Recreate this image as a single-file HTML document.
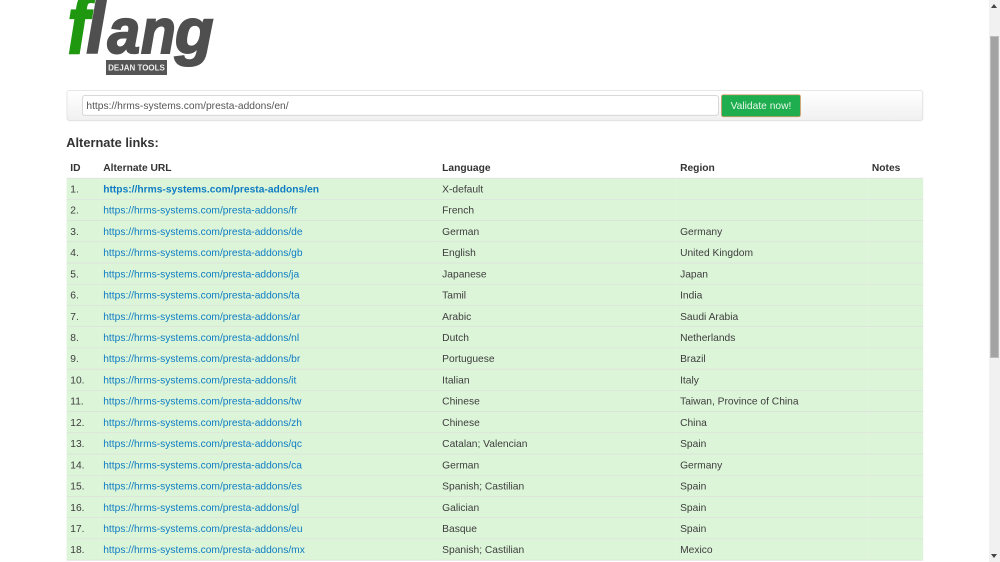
<!DOCTYPE html>
<html><head><meta charset="utf-8"><title>flang</title>
<style>
html,body{margin:0;padding:0;width:1000px;height:562px;overflow:hidden;background:#fff}
#s{position:absolute;left:0;top:0;width:1351px;height:768px;transform:scale(.73206,.7318);transform-origin:0 0;font-family:"Liberation Sans",Arial,sans-serif;font-size:14px;color:#333;overflow:hidden;filter:blur(.35px)}
#nav{position:absolute;left:91px;top:123px;width:1168px;height:40px;border:1px solid #ddd;border-radius:4px;background:linear-gradient(#fff,#f0f0f0);box-shadow:0 1px 1px rgba(0,0,0,.05)}
#inp{position:absolute;left:112px;top:130px;width:858px;height:26px;padding:0 5px;border:1px solid #ccc;border-radius:4px;background:#fff;line-height:26px;color:#555;font-size:14px}
#btn{position:absolute;left:985px;top:129px;width:107px;height:29px;border:1px solid #e79a6e;border-radius:3px;background:#1fae4f;color:#e6f7ea;text-align:center;line-height:29px;font-size:14px}
h3{position:absolute;left:90.5px;top:184px;margin:0;font-size:17.5px;line-height:22px;font-weight:bold;color:#333}
table{position:absolute;left:91px;top:214px;width:1170px;table-layout:fixed;border-collapse:separate;border-spacing:0}
th,td{padding:0 0 0 5px;height:28px;line-height:28px;text-align:left;white-space:nowrap;border-bottom:1px solid #ddd}
th{height:29px;line-height:29px;font-weight:bold;border-bottom:1px solid #ddd}
th span{position:relative;top:.6px}
tbody tr{background:#dcf5d8}
td{color:#3d3d3d}
a{color:#0e7cc4;text-decoration:none}
#sb{position:absolute;left:989px;top:0;width:11px;height:562px;background:#f1f1f1}
#th{position:absolute;left:1px;top:36px;width:7px;height:320px;background:#a3a3a3;border:1px solid #bdbdbd}
#up{position:absolute;left:2px;top:4px;width:0;height:0;border-left:3.5px solid transparent;border-right:3.5px solid transparent;border-bottom:4px solid #444}
#dn{position:absolute;left:2px;top:554px;width:0;height:0;border-left:3.5px solid transparent;border-right:3.5px solid transparent;border-top:4px solid #444}
#logo{position:absolute;left:60px;top:0;filter:blur(.3px)}
</style></head><body>
<svg id="logo" width="170" height="80" viewBox="60 0 170 80" font-family="'Liberation Sans',Arial,sans-serif" font-weight="bold" font-style="italic">
<text transform="translate(67.5 53) scale(1.1,1.35)" font-size="60" fill="#1f980f" stroke="#1f980f" stroke-width="1.6">f</text>
<text transform="translate(86 53) scale(1.2,1.35)" font-size="60" fill="#4f4f4f" stroke="#4f4f4f" stroke-width="1.2">l</text>
<text transform="translate(107.5 53) scale(.93,1)" font-size="63" fill="#4f4f4f" stroke="#4f4f4f" stroke-width="2">a</text>
<text transform="translate(141 53) scale(.9,1)" font-size="63" fill="#4f4f4f" stroke="#4f4f4f" stroke-width="2">n</text>
<text transform="translate(175 53)" font-size="63" fill="#4f4f4f" stroke="#4f4f4f" stroke-width="2">g</text>
<rect x="106" y="60" width="61" height="15" fill="#555"/>
<text x="136.5" y="70.5" text-anchor="middle" font-size="8" font-style="normal" fill="#eee">DEJAN TOOLS</text>
</svg>
<div id="s">
<div id="nav"></div>
<div id="inp">https://hrms-systems.com/presta-addons/en/</div>
<div id="btn">Validate now!</div>
<h3>Alternate links:</h3>
<table>
<colgroup><col style="width:45px"><col style="width:463px"><col style="width:325px"><col style="width:262px"><col></colgroup>
<thead><tr><th><span>ID</span></th><th><span>Alternate URL</span></th><th><span>Language</span></th><th><span>Region</span></th><th><span>Notes</span></th></tr></thead>
<tbody>
<tr><td>1.</td><td><a href="#"><b>https://hrms-systems.com/presta-addons/en</b></a></td><td>X-default</td><td></td><td></td></tr>
<tr><td>2.</td><td><a href="#">https://hrms-systems.com/presta-addons/fr</a></td><td>French</td><td></td><td></td></tr>
<tr><td>3.</td><td><a href="#">https://hrms-systems.com/presta-addons/de</a></td><td>German</td><td>Germany</td><td></td></tr>
<tr><td>4.</td><td><a href="#">https://hrms-systems.com/presta-addons/gb</a></td><td>English</td><td>United Kingdom</td><td></td></tr>
<tr><td>5.</td><td><a href="#">https://hrms-systems.com/presta-addons/ja</a></td><td>Japanese</td><td>Japan</td><td></td></tr>
<tr><td>6.</td><td><a href="#">https://hrms-systems.com/presta-addons/ta</a></td><td>Tamil</td><td>India</td><td></td></tr>
<tr><td>7.</td><td><a href="#">https://hrms-systems.com/presta-addons/ar</a></td><td>Arabic</td><td>Saudi Arabia</td><td></td></tr>
<tr><td>8.</td><td><a href="#">https://hrms-systems.com/presta-addons/nl</a></td><td>Dutch</td><td>Netherlands</td><td></td></tr>
<tr><td>9.</td><td><a href="#">https://hrms-systems.com/presta-addons/br</a></td><td>Portuguese</td><td>Brazil</td><td></td></tr>
<tr><td>10.</td><td><a href="#">https://hrms-systems.com/presta-addons/it</a></td><td>Italian</td><td>Italy</td><td></td></tr>
<tr><td>11.</td><td><a href="#">https://hrms-systems.com/presta-addons/tw</a></td><td>Chinese</td><td>Taiwan, Province of China</td><td></td></tr>
<tr><td>12.</td><td><a href="#">https://hrms-systems.com/presta-addons/zh</a></td><td>Chinese</td><td>China</td><td></td></tr>
<tr><td>13.</td><td><a href="#">https://hrms-systems.com/presta-addons/qc</a></td><td>Catalan; Valencian</td><td>Spain</td><td></td></tr>
<tr><td>14.</td><td><a href="#">https://hrms-systems.com/presta-addons/ca</a></td><td>German</td><td>Germany</td><td></td></tr>
<tr><td>15.</td><td><a href="#">https://hrms-systems.com/presta-addons/es</a></td><td>Spanish; Castilian</td><td>Spain</td><td></td></tr>
<tr><td>16.</td><td><a href="#">https://hrms-systems.com/presta-addons/gl</a></td><td>Galician</td><td>Spain</td><td></td></tr>
<tr><td>17.</td><td><a href="#">https://hrms-systems.com/presta-addons/eu</a></td><td>Basque</td><td>Spain</td><td></td></tr>
<tr><td>18.</td><td><a href="#">https://hrms-systems.com/presta-addons/mx</a></td><td>Spanish; Castilian</td><td>Mexico</td><td></td></tr>
</tbody></table>
</div>
<div id="sb"><div id="up"></div><div id="th"></div><div id="dn"></div></div>
</body></html>
